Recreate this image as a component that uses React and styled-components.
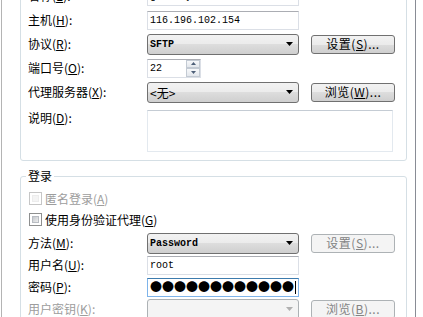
import React from 'react';
import styled, { createGlobalStyle } from 'styled-components';

const GlobalStyle = createGlobalStyle`
  *, *::before, *::after { box-sizing: border-box; }
  html, body { margin: 0; padding: 0; background: #fff; }
  body {
    font-family: "Noto Sans CJK SC", "Noto Sans", sans-serif;
    font-size: 12px;
    color: #000;
    overflow: hidden;
  }
`;

const Page = styled.div`
  width: 423px;
  height: 317px;
  overflow: hidden;
`;

const Frame = styled.div`
  margin-top: -25px;
  margin-left: 1px;
  width: 415px;
  min-height: 380px;
  border-left: 1px solid #b4b4b4;
  border-right: 1px solid #898c95;
  padding: 0 8px 0 18px;
`;

const Group = styled.div`
  border: 1px solid #d5dfe5;
  border-radius: 3px;
  padding: 8px 0 8px 7px;
`;

const LoginGroup = styled.fieldset`
  margin: 7px 0 0 0;
  border: 1px solid #d5dfe5;
  border-radius: 3px;
  padding: 4px 0 8px 7px;
  min-inline-size: 0;
`;

const Legend = styled.legend`
  margin-left: -2px;
  padding: 0 2px;
  line-height: 16px;
  font-size: 12px;
`;

const Row = styled.div`
  display: grid;
  grid-template-columns: 119px 152px 84px;
  align-items: ${p => (p.$top ? 'start' : 'center')};
  height: ${p => (p.$h ? `${p.$h}px` : 'auto')};
  padding-top: ${p => p.$pt || 0}px;

  & > :nth-child(3) {
    margin-left: 12px;
  }
`;

const Label = styled.span`
  line-height: 14px;
  white-space: nowrap;
  color: ${p => (p.$disabled ? '#9d9d9d' : '#000')};
  margin-top: ${p => p.$mt || 0}px;
`;

const Key = styled.span`
  text-decoration: underline;
  text-underline-offset: 1px;
`;

const Field = styled.div`
  position: relative;
  width: ${p => p.$w || 152}px;
  height: ${p => p.$h || 19}px;
  border: 1px solid ${p => (p.$focus ? '#7eb4ea' : '#dbdfe6')};
  border-top-color: ${p => (p.$focus ? '#3d7bad' : '#abadb3')};
  background: #fff;
  display: flex;
  align-items: center;
  padding-left: 2px;
  font-family: "Liberation Mono", "DejaVu Sans Mono", monospace;
  font-size: 10px;
  grid-column: ${p => p.$span || 'auto'};
`;

const Memo = styled(Field)`
  border-color: #e3e9ef;
  border-top-color: #c5ccd4;
`;

const Combo = styled.div`
  width: 152px;
  height: 21px;
  border: 1px solid ${p => (p.$disabled ? '#adb2b5' : '#707070')};
  border-radius: 3px;
  background: ${p =>
    p.$disabled
      ? '#f4f4f4'
      : 'linear-gradient(#f2f2f2 0%, #ebebeb 50%, #dddddd 50%, #cfcfcf 100%)'};
  display: flex;
  align-items: center;
  padding: 0 5px 0 2px;
  font-family: ${p =>
    p.$mono
      ? '"Liberation Mono", "DejaVu Sans Mono", monospace'
      : '"Noto Sans CJK SC", sans-serif'};
  font-size: ${p => (p.$mono ? 10 : 12)}px;
  font-weight: ${p => (p.$mono ? 'bold' : 'normal')};
  color: #000;
`;

const ComboText = styled.span`
  flex: 1;
  white-space: nowrap;
`;

const Button = styled.div`
  width: 84px;
  height: 19px;
  border: 1px solid ${p => (p.$disabled ? '#adb2b5' : '#707070')};
  border-radius: 3px;
  background: ${p =>
    p.$disabled
      ? '#f4f4f4'
      : 'linear-gradient(#f2f2f2 0%, #ebebeb 50%, #dddddd 50%, #cfcfcf 100%)'};
  color: ${p => (p.$disabled ? '#838383' : '#000')};
  display: flex;
  align-items: center;
  justify-content: center;
  line-height: 14px;
  letter-spacing: 0.5px;
  white-space: nowrap;
`;

const Spin = styled.div`
  position: absolute;
  right: 0;
  top: 0;
  bottom: 0;
  width: 14px;
  display: flex;
  flex-direction: column;
`;

const SpinButton = styled.div`
  flex: 1;
  border: 1px solid #c3cad3;
  background: linear-gradient(#f7f8fa, #e3e7ec);
  display: flex;
  align-items: center;
  justify-content: center;
`;

const CheckRow = styled.div`
  display: flex;
  align-items: center;
  gap: 3px;
  height: 21px;
  padding-left: 1px;
`;

const Box = styled.span`
  position: relative;
  width: 13px;
  height: 13px;
  border: 1px solid ${p => (p.$disabled ? '#c6c6c6' : '#8e8f8f')};
  background: #fff;

  &::after {
    content: "";
    position: absolute;
    inset: 2px;
    background: ${p =>
      p.$disabled ? '#f4f4f4' : 'linear-gradient(135deg, #c4c8cd, #eeeeee)'};
    border: 1px solid ${p => (p.$disabled ? '#ececec' : '#b8bcc2')};
  }
`;

const Spacer = styled.div`
  height: ${p => p.$h}px;
`;

const Dots = styled.span`
  font-family: "Noto Sans CJK SC", sans-serif;
  font-size: 12px;
  line-height: 14px;
  white-space: nowrap;
`;

const Caret = styled.span`
  display: inline-block;
  width: 1px;
  height: 13px;
  background: #000;
  margin-left: 1px;
`;

const Arrow = ({ color = '#000' }) => (
  <svg width="7" height="4" viewBox="0 0 7 4">
    <path d="M0 0h7L3.5 4z" fill={color} />
  </svg>
);

const SpinArrow = ({ up }) => (
  <svg width="5" height="3" viewBox="0 0 5 3">
    <path d={up ? 'M0 3h5L2.5 0z' : 'M0 0h5L2.5 3z'} fill="#4d5f78" />
  </svg>
);

const Mn = ({ text, k, tail = ':' }) => (
  <>
    {text}(<Key>{k}</Key>){tail}
  </>
);

export default function App() {
  return (
    <Page>
      <GlobalStyle />
      <Frame>
        <Group>
          <Row $h={24}>
            <Label><Mn text="名称" k="E" /></Label>
            <Field>gateway</Field>
          </Row>
          <Row $h={24}>
            <Label><Mn text="主机" k="H" /></Label>
            <Field>116.196.102.154</Field>
          </Row>
          <Row $h={24}>
            <Label><Mn text="协议" k="R" /></Label>
            <Combo $mono>
              <ComboText>SFTP</ComboText>
              <Arrow />
            </Combo>
            <Button><Mn text="设置" k="S" tail="..." /></Button>
          </Row>
          <Row $h={24}>
            <Label><Mn text="端口号" k="O" /></Label>
            <Field $w={54}>
              22
              <Spin>
                <SpinButton><SpinArrow up /></SpinButton>
                <SpinButton><SpinArrow /></SpinButton>
              </Spin>
            </Field>
          </Row>
          <Row $h={24}>
            <Label><Mn text="代理服务器" k="X" /></Label>
            <Combo>
              <ComboText>&lt;无&gt;</ComboText>
              <Arrow />
            </Combo>
            <Button><Mn text="浏览" k="W" tail="..." /></Button>
          </Row>
          <Row $top $pt={6}>
            <Label $mt={1}><Mn text="说明" k="D" /></Label>
            <Memo $w={246} $h={42} $span="2 / 4" />
          </Row>
        </Group>

        <LoginGroup>
          <Legend>登录</Legend>
          <CheckRow>
            <Box $disabled />
            <Label $disabled>匿名登录(<Key>A</Key>)</Label>
          </CheckRow>
          <CheckRow>
            <Box />
            <Label>使用身份验证代理(<Key>G</Key>)</Label>
          </CheckRow>
          <Spacer $h={2} />
          <Row $h={22}>
            <Label><Mn text="方法" k="M" /></Label>
            <Combo $mono>
              <ComboText>Password</ComboText>
              <Arrow />
            </Combo>
            <Button $disabled><Mn text="设置" k="S" tail="..." /></Button>
          </Row>
          <Row $h={22}>
            <Label><Mn text="用户名" k="U" /></Label>
            <Field>root</Field>
          </Row>
          <Row $h={22}>
            <Label><Mn text="密码" k="P" /></Label>
            <Field $focus>
              <Dots>●●●●●●●●●●●●</Dots>
              <Caret />
            </Field>
          </Row>
          <Row $h={22}>
            <Label $disabled><Mn text="用户密钥" k="K" /></Label>
            <Combo $disabled>
              <ComboText />
              <Arrow color="#b0b0b0" />
            </Combo>
            <Button $disabled><Mn text="浏览" k="B" tail="..." /></Button>
          </Row>
        </LoginGroup>
      </Frame>
    </Page>
  );
}
